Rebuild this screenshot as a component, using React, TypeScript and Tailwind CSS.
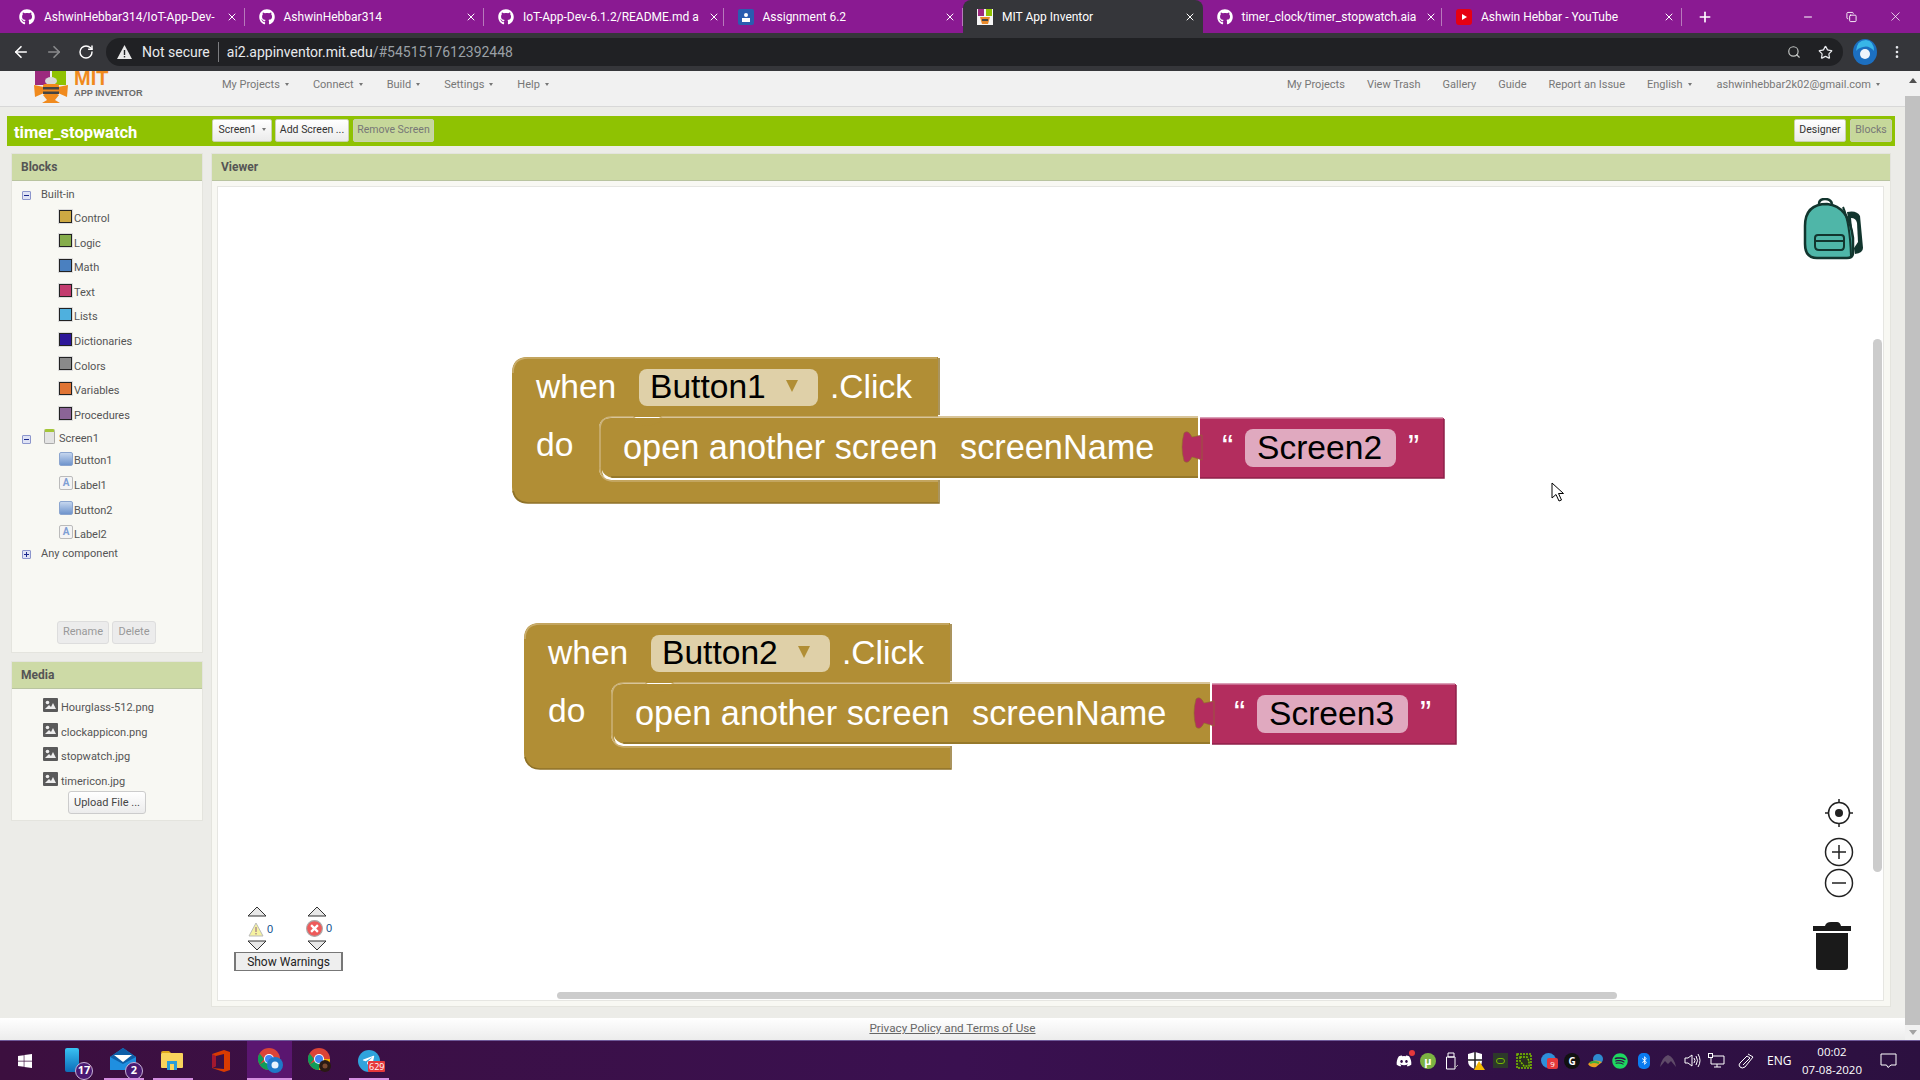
import { ArrowLeft, ArrowRight, RotateCw, Search, Star, X, Plus, Minus, Copy, EllipsisVertical } from 'lucide-react'
import { FaGithub, FaWindows, FaDiscord, FaSpotify, FaBluetoothB, FaTelegramPlane } from 'react-icons/fa'

const TABS = [
  { title: 'AshwinHebbar314/IoT-App-Dev-', icon: 'gh' },
  { title: 'AshwinHebbar314', icon: 'gh' },
  { title: 'IoT-App-Dev-6.1.2/README.md a', icon: 'gh' },
  { title: 'Assignment 6.2', icon: 'doc' },
  { title: 'MIT App Inventor', icon: 'mit', active: true },
  { title: 'timer_clock/timer_stopwatch.aia', icon: 'gh' },
  { title: 'Ashwin Hebbar - YouTube', icon: 'yt' },
]

const BUILT_IN = [
  { name: 'Control', color: 'bg-[#cda943]' },
  { name: 'Logic', color: 'bg-[#85ad4b]' },
  { name: 'Math', color: 'bg-[#4a80c0]' },
  { name: 'Text', color: 'bg-[#c23b6e]' },
  { name: 'Lists', color: 'bg-[#4fb0de]' },
  { name: 'Dictionaries', color: 'bg-[#2d1799]' },
  { name: 'Colors', color: 'bg-[#8a8a8a]' },
  { name: 'Variables', color: 'bg-[#e07434]' },
  { name: 'Procedures', color: 'bg-[#8b6497]' },
]

const COMPONENTS = [
  { name: 'Button1', kind: 'button' },
  { name: 'Label1', kind: 'label' },
  { name: 'Button2', kind: 'button' },
  { name: 'Label2', kind: 'label' },
]

const MEDIA = ['Hourglass-512.png', 'clockappicon.png', 'stopwatch.jpg', 'timericon.jpg']

function TabIcon({ kind }: { kind: string }) {
  if (kind === 'gh') return <FaGithub className="w-[16px] h-[16px] text-white shrink-0" />
  if (kind === 'doc')
    return (
      <svg width="16" height="16" viewBox="0 0 16 16" className="shrink-0">
        <rect width="16" height="16" rx="2" fill="#2a5db0" />
        <circle cx="8" cy="6" r="2" fill="#fff" />
        <rect x="4" y="9" width="8" height="4" fill="#fff" />
      </svg>
    )
  if (kind === 'yt')
    return (
      <svg width="16" height="16" viewBox="0 0 16 16" className="shrink-0">
        <rect width="16" height="16" rx="3" fill="#e60012" />
        <path d="M6 5l5 3-5 3z" fill="#fff" />
      </svg>
    )
  return (
    <svg width="16" height="16" viewBox="0 0 16 16" className="shrink-0">
      <rect width="16" height="16" fill="#f5f5f5" />
      <rect x="1" y="0" width="6" height="7" fill="#9c2a7e" />
      <rect x="9" y="0" width="6" height="7" fill="#8fc202" />
      <path d="M3 8h10l-2 7H5z" fill="#e98a2b" />
      <rect x="5" y="10" width="6" height="2" fill="#444" />
    </svg>
  )
}

function Tab({ title, icon, active }: { title: string; icon: string; active?: boolean }) {
  return (
    <div className={`w-[239.5px] h-[33px] shrink-0 flex items-center pl-[14px] pr-[7px] pt-[1px] gap-[9px] relative ${active ? 'bg-[#35363a] rounded-t-[8px]' : ''}`}>
      <TabIcon kind={icon} />
      <span className="flex-1 text-[12px] text-white whitespace-nowrap">{title}</span>
      <X className="w-[12px] h-[12px] text-white shrink-0" strokeWidth={2} />
      {!active && <div className="absolute right-0 top-[8px] h-[18px] w-px bg-[#b77abb]" />}
    </div>
  )
}

function Caret() {
  return <span className="inline-block ml-[5px] mb-[2px] w-0 h-0 border-x-[2px] border-x-transparent border-t-[3px] border-t-[#777]" />
}

function Logo() {
  return (
    <div className="w-[118px] h-[35px] ml-[32px] relative overflow-hidden shrink-0">
      <svg width="40" height="35" viewBox="0 0 40 35" className="absolute left-0 top-0">
        <rect x="3" y="0" width="15" height="14" fill="#9c2a7e" />
        <rect x="20" y="0" width="14" height="14" fill="#8fc202" />
        <path d="M2 14l10 2v6l-9 4zM36 14l-10 2v6l9 4z" fill="#f08a1d" />
        <ellipse cx="19" cy="10" rx="6" ry="4" fill="#d9d9d9" />
        <rect x="11" y="13" width="16" height="11" rx="2" fill="#f08a1d" />
        <rect x="11" y="16" width="16" height="2.5" fill="#444" />
        <rect x="11" y="20.5" width="16" height="2.5" fill="#444" />
        <path d="M11 24h16l-4 5 5 3H10l5-3z" fill="#f08a1d" />
      </svg>
      <span className="absolute left-[42px] -top-[5px] font-['Liberation_Sans',sans-serif] font-bold text-[20px] leading-[24px] text-[#f08a1d]">MIT</span>
      <span className="absolute left-[42px] top-[16px] font-['Liberation_Sans',sans-serif] font-bold text-[9.2px] leading-[12px] text-[#6b6b6b] whitespace-nowrap">APP INVENTOR</span>
    </div>
  )
}

function GreenButton({ label, off, caret, className }: { label: string; off?: boolean; caret?: boolean; className: string }) {
  return (
    <div className={`h-[23px] -mt-[2px] rounded-[2px] flex items-center justify-center text-[10.5px] whitespace-nowrap border border-[#c9d1b0] ${off ? 'bg-[#c6d89a] text-[#777]' : 'bg-gradient-to-b from-white to-[#ebebeb] text-[#333]'} ${className}`}>
      {label}
      {caret && <Caret />}
    </div>
  )
}

function TreeToggle({ open }: { open?: boolean }) {
  return (
    <span className="w-[9px] h-[9px] rounded-[1px] bg-[#dfe3f5] border border-[#8c96cc] relative shrink-0">
      <span className="absolute left-[1px] right-[1px] top-[3px] h-px bg-[#1c2a8c]" />
      {!open && <span className="absolute top-[1px] bottom-[1px] left-[3px] w-px bg-[#1c2a8c]" />}
    </span>
  )
}

function ComponentIcon({ kind }: { kind: string }) {
  if (kind === 'button')
    return <span className="w-[14px] h-[14px] -mt-[6px] rounded-[2px] bg-gradient-to-b from-[#c5d6ee] to-[#6f94cc] border border-[#8ba5cf] shrink-0" />
  return (
    <span className="w-[14px] h-[14px] -mt-[6px] rounded-[2px] bg-[#f4f4f4] border border-[#bbb] shrink-0 flex items-center justify-center text-[10px] leading-none font-bold text-[#7f9fd4]">A</span>
  )
}

function MediaIcon() {
  return (
    <svg width="15" height="14" viewBox="0 0 15 14" className="-mt-[6px] shrink-0">
      <rect width="15" height="14" rx="1" fill="#5a5a5a" />
      <circle cx="4.5" cy="4.5" r="1.8" fill="#eee" />
      <path d="M2 11l4-4 2 2 2-4 3 6z" fill="#eee" />
    </svg>
  )
}

function PanelHeader({ title }: { title: string }) {
  return (
    <div className="h-[27px] bg-[#cddaa6] border-b border-[#b9c4a0] flex items-center pl-[9px] text-[12px] font-bold text-[#555] shrink-0">
      {title}
    </div>
  )
}

function WhenBlock({ button, screen, className }: { button: string; screen: string; className: string }) {
  const t = "font-['Liberation_Sans',sans-serif] text-[33.6px] fill-white"
  const s = "font-['Liberation_Sans',sans-serif] text-[34.3px] fill-white"
  const f = "font-['Liberation_Sans',sans-serif] text-[33.6px] fill-black"
  return (
    <svg width="940" height="150" viewBox="0 0 940 150" className={`absolute ${className}`}>
      <path d="M0 16Q0 0 16 0H426V60H100Q87 60 87 72V110Q87 123 100 123H426V146H16Q0 146 0 130Z" fill="#b18e35" />
      <path d="M1 16Q1 1 16 1H425" fill="none" stroke="#c9ad6e" strokeWidth="1.5" />
      <path d="M427 1V58M427 123V146H16Q4 146 1 134" fill="none" stroke="#8e7229" strokeWidth="1.5" />
      <path d="M99 61H686V121H99Q87 121 87 109V73Q87 61 99 61Z" fill="#b18e35" />
      <path d="M88 110V73Q88 60 100 60H121L130 66Q134 68 140 66L150 60H686" fill="none" stroke="#cbb27a" strokeWidth="1.5" />
      <path d="M121 61L130 68Q134 70 140 68L158 61Z" fill="#b18e35" />
      <path d="M88 110Q88 123 100 124H426" fill="none" stroke="#c9ad6e" strokeWidth="1.5" />
      <path d="M99 120H686" fill="none" stroke="#8e7229" strokeWidth="1.5" />
      <path d="M90 113Q92 119 100 121L96 122Q90 120 90 113Z" fill="#fff" />
      <rect x="688" y="61" width="244" height="60" fill="#b32d5e" />
      <path d="M688 61H931" fill="none" stroke="#cf7f9f" strokeWidth="1.5" />
      <path d="M932 62V121H688" fill="none" stroke="#8f2049" strokeWidth="1.5" />
      <path d="M690 78L680 80Q676 72 672 76Q668 90 672 104Q676 108 680 100L690 103Z" fill="#b32d5e" stroke="#8e7229" strokeWidth="0.6" />
      <rect x="127" y="12" width="179" height="37" rx="8" fill="#dfd0a8" />
      <path d="M274 23H286L280 35Z" fill="#b18e35" />
      <rect x="733" y="72" width="151" height="38" rx="8" fill="#e0a9bf" />
      <text x="24" y="41" className={t}>when</text>
      <text x="138" y="41" className={f}>{button}</text>
      <text x="318" y="41" className={t}>.Click</text>
      <text x="24" y="99" className={t}>do</text>
      <text x="111" y="102" className={s}>open another screen</text>
      <text x="448" y="102" className={s}>screenName</text>
      <text x="710" y="101" className={t}>“</text>
      <text x="745" y="102" className={f}>{screen}</text>
      <text x="896" y="101" className={t}>”</text>
    </svg>
  )
}

function Backpack() {
  return (
    <svg width="62" height="62" viewBox="0 0 62 62" className="absolute left-[1585px] top-[11px]">
      <path d="M44 14Q54 12 57 18L60 50Q60 55 52 56Z" fill="#12352e" />
      <path d="M48 20Q53 20 54 25L55 44L51 50Z" fill="#fff" />
      <path d="M16 6Q16 1 22 1Q28 1 29 6" fill="none" stroke="#12352e" strokeWidth="2.5" />
      <path d="M2 28Q2 6 24 6Q46 8 50 40V55Q50 60 44 60H14Q2 60 2 46Z" fill="#4fb6a8" stroke="#12352e" strokeWidth="2.5" />
      <path d="M40 9Q47 25 48 58" fill="none" stroke="#12352e" strokeWidth="2" />
      <path d="M12 40Q12 37 15 37H38Q41 37 41 40V48Q41 52 38 52H16Q12 52 12 48Z" fill="#4fb6a8" stroke="#12352e" strokeWidth="2" />
      <path d="M12 43H41" stroke="#12352e" strokeWidth="2" />
    </svg>
  )
}

function Tri({ up }: { up?: boolean }) {
  return (
    <svg width="20" height="11" viewBox="0 0 20 11" className="block">
      <path d={up ? 'M1 10L10 1L19 10Z' : 'M1 1L10 10L19 1Z'} fill="#e8e8e8" stroke="#333" strokeWidth="1" />
    </svg>
  )
}

function Chrome({ badge }: { badge: 'blue' | 'photo' }) {
  return (
    <svg width="26" height="26" viewBox="0 0 26 26" className="ml-[3px]">
      <circle cx="11" cy="11" r="11" fill="#db4437" />
      <path d="M11 11L1.5 16.5A11 11 0 0 0 11 22Z" fill="#0f9d58" />
      <path d="M1.5 16.5A11 11 0 0 1 1.5 5.5L6 11Z" fill="#0f9d58" />
      <path d="M11 11L22 11A11 11 0 0 1 11 22Z" fill="#f4b400" />
      <circle cx="11" cy="11" r="5" fill="#fff" />
      <circle cx="11" cy="11" r="4" fill="#4285f4" />
      {badge === 'blue' ? (
        <>
          <circle cx="17" cy="17" r="8" fill="#1f78c8" />
          <circle cx="17" cy="17" r="3.5" fill="#e8f4ff" />
        </>
      ) : (
        <>
          <circle cx="17" cy="18" r="6" fill="#2a1a14" />
          <circle cx="17" cy="18" r="2.5" fill="#7a4a30" />
        </>
      )}
    </svg>
  )
}

function TaskBadge({ n }: { n: string }) {
  return (
    <span className="absolute left-[15px] top-[14px] w-[18px] h-[18px] rounded-full bg-[#4a1a72] border border-[#c9b5d8] text-white text-[11px] font-bold flex items-center justify-center">{n}</span>
  )
}

function Taskbar() {
  return (
    <div className="h-[40px] shrink-0 bg-gradient-to-r from-[#3c0f3f] via-[#3a1050] to-[#2c1040] border-t border-[#6f5a9a] flex items-center relative text-white font-['Open_Sans',sans-serif]">
      <div className="w-[49px] flex justify-center"><FaWindows className="w-[16px] h-[16px]" /></div>
      <div className="w-[49px] flex justify-center">
        <div className="relative w-[32px] h-[26px] ml-[5px]">
          <span className="absolute left-[5px] top-0 w-[14px] h-[24px] rounded-[2px] bg-gradient-to-b from-[#39c2f3] to-[#0e6db8]" />
          <TaskBadge n="17" />
        </div>
      </div>
      <div className="w-[49px] flex justify-center">
        <div className="relative w-[32px] h-[26px] ml-[7px]">
          <svg width="26" height="22" viewBox="0 0 26 22" className="absolute left-0 top-0">
            <path d="M0 9L13 0L26 9V22H0Z" fill="#1f8fe0" />
            <path d="M0 9L13 0L26 9L13 16Z" fill="#0f5fa8" />
            <path d="M4 7H22L13 14Z" fill="#fff" />
          </svg>
          <TaskBadge n="2" />
        </div>
      </div>
      <div className="w-[49px] flex justify-center">
        <svg width="22" height="19" viewBox="0 0 22 19">
          <path d="M0 2Q0 0 2 0H8L10 2H0Z" fill="#e0a81c" />
          <rect y="2" width="22" height="15" rx="1" fill="#f9d35c" />
          <rect x="6" y="10" width="10" height="9" fill="#2b9ed8" />
          <rect x="9" y="13" width="4" height="6" fill="#f9d35c" />
        </svg>
      </div>
      <div className="w-[49px] flex justify-center">
        <svg width="18" height="22" viewBox="0 0 18 22">
          <path d="M0 4L12 0L18 2V20L12 22L0 18L12 19V4L4 6V16L0 18Z" fill="#d83b01" />
          <path d="M0 4L4 6V16L0 18Z" fill="#a3182f" />
        </svg>
      </div>
      <div className="w-[45px] h-full bg-[#5a1670] flex justify-center items-center ml-[2px]"><Chrome badge="blue" /></div>
      <div className="w-[55px] flex justify-center"><Chrome badge="photo" /></div>
      <div className="w-[43px] flex justify-center relative">
        <span className="w-[22px] h-[22px] rounded-full bg-[#2fa3dc] flex items-center justify-center">
          <FaTelegramPlane className="w-[13px] h-[13px] text-white" />
        </span>
        <span className="absolute left-[21px] top-[11px] px-[1px] rounded-[1px] bg-[#e5383b] text-[9px] leading-[11px] text-white">629</span>
      </div>
      <div className="absolute bottom-0 left-[104px] w-[40px] h-[2px] bg-[#d48ee0]" />
      <div className="absolute bottom-0 left-[153px] w-[40px] h-[2px] bg-[#d48ee0]" />
      <div className="absolute bottom-0 left-[247px] w-[45px] h-[2px] bg-[#d48ee0]" />
      <div className="absolute bottom-0 left-[349px] w-[40px] h-[2px] bg-[#d48ee0]" />

      <div className="flex-1" />
      <div className="flex items-center h-full">
        <div className="w-[24px] flex justify-center relative">
          <FaDiscord className="w-[16px] h-[16px]" />
          <span className="absolute right-[1px] -top-[3px] w-[6px] h-[6px] rounded-full bg-[#e5383b]" />
        </div>
        <div className="w-[24px] flex justify-center">
          <span className="w-[16px] h-[16px] rounded-full bg-[#7cb342] text-white text-[11px] leading-[16px] text-center font-bold">µ</span>
        </div>
        <div className="w-[24px] flex justify-center">
          <svg width="14" height="18" viewBox="0 0 14 18" fill="none" stroke="#fff" strokeWidth="1">
            <path d="M3 1H9V5H3ZM1.5 5H10V17H1.5Z" />
            <path d="M9 14l1.5 1.5L13 13" stroke="#aaa" />
          </svg>
        </div>
        <div className="w-[24px] flex justify-center">
          <svg width="18" height="18" viewBox="0 0 18 18">
            <path d="M1 2L8 0L15 2V9Q15 15 8 17Q1 15 1 9Z" fill="#fff" />
            <path d="M8 0V17M1 8H15" stroke="#222" strokeWidth="1.5" />
            <path d="M12 9L18 18H7Z" fill="#f5b800" />
          </svg>
        </div>
        <div className="w-[24px] flex justify-center">
          <span className="w-[15px] h-[15px] bg-[#2d3a2a] flex items-center justify-center">
            <span className="w-[9px] h-[6px] rounded-full border border-[#76b900]" />
          </span>
        </div>
        <div className="w-[24px] flex justify-center">
          <svg width="16" height="16" viewBox="0 0 16 16" fill="none" stroke="#7cc000" strokeWidth="1.5" strokeDasharray="2 1">
            <rect x="1" y="1" width="14" height="14" fill="#2a3020" />
            <path d="M4 4H11L13 8V13H8L4 8Z" />
          </svg>
        </div>
        <div className="w-[24px] flex justify-center relative">
          <span className="w-[15px] h-[15px] rounded-full bg-[#2f8fd8]" />
          <span className="absolute left-[11px] top-[5px] w-[11px] h-[11px] rounded-[2px] bg-[#e5383b] text-[8px] leading-[11px] text-center">9</span>
        </div>
        <div className="w-[24px] flex justify-center">
          <span className="w-[16px] h-[16px] rounded-full bg-[#111] text-white text-[10px] leading-[16px] text-center font-bold">G</span>
        </div>
        <div className="w-[24px] flex justify-center">
          <svg width="16" height="16" viewBox="0 0 16 16">
            <circle cx="10" cy="6" r="5" fill="#2e8bcf" />
            <path d="M0 11Q6 5 14 9L8 14Q3 15 0 11Z" fill="#e8a020" />
            <path d="M2 10Q6 8 11 10" stroke="#3cae3c" strokeWidth="2" fill="none" />
          </svg>
        </div>
        <div className="w-[24px] flex justify-center"><FaSpotify className="w-[16px] h-[16px] text-[#1ed760]" /></div>
        <div className="w-[24px] flex justify-center">
          <span className="w-[12px] h-[16px] rounded-[5px] bg-[#0a7bf0] flex items-center justify-center"><FaBluetoothB className="w-[9px] h-[9px]" /></span>
        </div>
        <div className="w-[24px] flex justify-center">
          <svg width="16" height="12" viewBox="0 0 16 12"><path d="M0 12Q2 2 8 0Q14 2 16 12L11 6L8 9L5 6Z" fill="#5f4a68" /></svg>
        </div>
        <div className="w-[24px] flex justify-center">
          <svg width="17" height="15" viewBox="0 0 17 15" fill="none" stroke="#fff" strokeWidth="1">
            <path d="M1 5H4L8 2V13L4 10H1Z" />
            <path d="M10 5Q12 7.5 10 10M12 3Q15 7.5 12 12M14 1Q18 7.5 14 14" />
          </svg>
        </div>
        <div className="w-[24px] flex justify-center">
          <svg width="17" height="15" viewBox="0 0 17 15" fill="none" stroke="#fff" strokeWidth="1">
            <path d="M3 3H16V11H3ZM9 11V14M6 14H13" />
            <rect x="0.5" y="0.5" width="4" height="4" fill="#2c1040" />
          </svg>
        </div>
        <div className="w-[36px] flex justify-center">
          <svg width="16" height="16" viewBox="0 0 16 16" fill="none" stroke="#fff" strokeWidth="1">
            <path d="M10 1L15 4L7 14Q4 16 2 14Q0 12 2 10L9 3L12 5L5 12" />
          </svg>
        </div>
      </div>
      <span className="text-[12px] ml-[3px] w-[30px]">ENG</span>
      <div className="w-[70px] mr-[5px] text-center text-[11.5px] leading-[18px]">
        <div>00:02</div>
        <div>07-08-2020</div>
      </div>
      <div className="w-[48px] pr-[16px] flex justify-center">
        <svg width="17" height="15" viewBox="0 0 17 15" fill="none" stroke="#fff" strokeWidth="1">
          <path d="M1 1H16V12H11L8 14.5L6.5 12H1Z" />
        </svg>
      </div>
    </div>
  )
}

export default function App() {
  return (
    <div className="w-[1920px] h-[1080px] overflow-hidden flex flex-col font-['Roboto',sans-serif]">
      {/* Browser tabs */}
      <div className="h-[33px] bg-[#8a1a92] flex items-center shrink-0 pl-[5px] relative">
        {TABS.map((tab) => (
          <Tab key={tab.title} {...tab} />
        ))}
        <Plus className="w-[16px] h-[16px] text-white ml-[15px]" strokeWidth={2.5} />
        <div className="flex-1" />
        <Minus className="w-[12px] h-[12px] text-white mr-[32px]" />
        <Copy className="w-[11px] h-[12px] text-white mr-[31px]" />
        <X className="w-[15px] h-[15px] text-white mr-[17px]" strokeWidth={1.2} />
      </div>

      {/* Browser toolbar */}
      <div className="h-[38px] bg-[#35363a] flex items-center shrink-0 pl-[12px]">
        <ArrowLeft className="w-[18px] h-[18px] text-white" strokeWidth={2.2} />
        <ArrowRight className="w-[18px] h-[18px] text-[#8a8b8d] ml-[15px]" strokeWidth={2.2} />
        <RotateCw className="w-[16px] h-[16px] text-white ml-[15px]" strokeWidth={2.2} />
        <div className="ml-[12px] w-[1737px] h-[28px] rounded-full bg-[#202124] flex items-center pl-[11px] relative text-[14px]">
          <svg width="15" height="14" viewBox="0 0 15 14"><path d="M7.5 0L15 14H0Z" fill="#e8e8e8" /><rect x="6.8" y="5" width="1.4" height="5" fill="#202124" /><rect x="6.8" y="11" width="1.4" height="1.4" fill="#202124" /></svg>
          <span className="ml-[10px] text-[#e8eaed]">Not secure</span>
          <span className="ml-[8px] w-px h-[20px] bg-[#7c7d80]" />
          <span className="ml-[8px] text-[#e8eaed]">ai2.appinventor.mit.edu</span>
          <span className="text-[#9aa0a6]">/#5451517612392448</span>
          <div className="flex-1" />
          <Search className="w-[14px] h-[14px] text-[#c4c7c5]" />
          <Star className="w-[15px] h-[15px] text-[#e8eaed] ml-[17px] mr-[10px]" />
        </div>
        <svg width="24" height="26" viewBox="0 0 24 26" className="ml-[10px] shrink-0">
          <ellipse cx="12" cy="13" rx="12" ry="13" fill="#1c6fc0" />
          <path d="M3 12Q4 1 13 1Q21 2 21 12Q16 6 10 8Q5 9 3 12Z" fill="#38b6e8" />
          <circle cx="12" cy="15" r="5" fill="#eef4fb" />
        </svg>
        <EllipsisVertical className="w-[16px] h-[16px] text-[#e8eaed] ml-[12px]" />
      </div>

      {/* Page */}
      <div className="flex-1 flex min-h-0 bg-[#ecece8]">
        <div className="flex-1 flex flex-col min-w-0">
          {/* App Inventor menu */}
          <div className="h-[36px] bg-[#f1f1f1] border-b border-[#d8d8d8] flex items-center shrink-0 text-[11px] text-[#777]">
            <Logo />
            <div className="flex items-center ml-[72px] gap-[24px] -mt-[6px]">
              <span>My Projects<Caret /></span>
              <span>Connect<Caret /></span>
              <span>Build<Caret /></span>
              <span>Settings<Caret /></span>
              <span>Help<Caret /></span>
            </div>
            <div className="flex-1" />
            <div className="flex items-center gap-[22px] pr-[25px] -mt-[6px]">
              <span>My Projects</span>
              <span>View Trash</span>
              <span>Gallery</span>
              <span>Guide</span>
              <span>Report an Issue</span>
              <span>English<Caret /></span>
              <span className="ml-[3px]">ashwinhebbar2k02@gmail.com<Caret /></span>
            </div>
          </div>

          {/* Project bar */}
          <div className="h-[30px] mt-[9px] ml-[7px] mr-[10px] bg-[#8fc202] flex items-center shrink-0">
            <span className="ml-[7px] w-[198px] text-[16.5px] font-bold text-white pt-[5px]">timer_stopwatch</span>
            <GreenButton label="Screen1" caret className="w-[60px]" />
            <GreenButton label="Add Screen ..." className="w-[74px] ml-[3px]" />
            <GreenButton label="Remove Screen" off className="w-[81px] ml-[4px]" />
            <div className="flex-1" />
            <GreenButton label="Designer" className="w-[52px]" />
            <GreenButton label="Blocks" off className="w-[42px] ml-[4px] mr-[3px]" />
          </div>

          {/* Panels */}
          <div className="flex mt-[7px] ml-[11px] gap-[8px]">
            <div className="w-[192px] shrink-0 flex flex-col gap-[8px] text-[11px] text-[#555]">
              <div className="h-[500px] bg-[#f8f8f3] border border-[#e4e4de] flex flex-col">
                <PanelHeader title="Blocks" />
                <div className="flex items-center h-[14px] mt-[7px] pl-[10px]">
                  <TreeToggle open />
                  <span className="ml-[10px]">Built-in</span>
                </div>
                <div className="mt-[5px]">
                  {BUILT_IN.map((b) => (
                    <div key={b.name} className="h-[24.6px] flex items-center pl-[47px]">
                      <span className={`w-[13px] h-[13px] -mt-[6px] border border-[#222] ring-1 ring-[#dcdcdc] ${b.color}`} />
                      <span className="ml-[2px]">{b.name}</span>
                    </div>
                  ))}
                </div>
                <div className="h-[21px] flex items-center pl-[10px] pt-[1px]">
                  <TreeToggle open />
                  <span className="ml-[13px] w-[11px] h-[15px] -mt-[6px] rounded-[2px] bg-[#e4e4e4] border border-[#aaa] border-t-[3px] border-t-[#a4c639]" />
                  <span className="ml-[4px]">Screen1</span>
                </div>
                <div>
                  {COMPONENTS.map((c) => (
                    <div key={c.name} className="h-[24.6px] flex items-center pl-[47px]">
                      <ComponentIcon kind={c.kind} />
                      <span className="ml-[1px]">{c.name}</span>
                    </div>
                  ))}
                </div>
                <div className="flex items-center h-[14px] pl-[10px]">
                  <TreeToggle />
                  <span className="ml-[10px]">Any component</span>
                </div>
                <div className="mt-auto mb-[8px] flex justify-center gap-[3px] pr-[1px]">
                  <span className="w-[52px] h-[23px] rounded-[3px] border border-[#ddd] bg-[#ececec] text-[#999] flex items-center justify-center">Rename</span>
                  <span className="w-[44px] h-[23px] rounded-[3px] border border-[#ddd] bg-[#ececec] text-[#999] flex items-center justify-center">Delete</span>
                </div>
              </div>
              <div className="h-[160px] bg-[#f8f8f3] border border-[#e4e4de] flex flex-col">
                <PanelHeader title="Media" />
                <div className="mt-[7px]">
                  {MEDIA.map((m) => (
                    <div key={m} className="h-[24.6px] flex items-center pl-[31px]">
                      <MediaIcon />
                      <span className="ml-[3px]">{m}</span>
                    </div>
                  ))}
                </div>
                <div className="flex justify-center -mt-[3px]">
                  <span className="w-[78px] h-[23px] rounded-[3px] border border-[#ccc] bg-gradient-to-b from-white to-[#ececec] text-[#444] flex items-center justify-center">Upload File ...</span>
                </div>
              </div>
            </div>

            <div className="w-[1680px] h-[854px] bg-[#f8f8f3] border border-[#e4e4de] flex flex-col">
              <PanelHeader title="Viewer" />
              <div className="h-[815px] mt-[5px] ml-[5px] mr-[6px] bg-white border border-[#e6e6e2] relative overflow-hidden">
                <WhenBlock button="Button1" screen="Screen2" className="left-[294px] top-[170px]" />
                <WhenBlock button="Button2" screen="Screen3" className="left-[306px] top-[436px]" />
                <Backpack />

                {/* cursor */}
                <svg width="14" height="20" viewBox="0 0 14 20" className="absolute left-[1333px] top-[295px]">
                  <path d="M1 1V16L5 12.5L8 19L10.5 18L7.5 11.5H12.5Z" fill="#fff" stroke="#000" strokeWidth="1" />
                </svg>

                {/* warning counters */}
                <div className="absolute left-[29px] top-[719px] w-[20px]"><Tri up /></div>
                <div className="absolute left-[89px] top-[719px] w-[20px]"><Tri up /></div>
                <div className="absolute left-[30px] top-[734px] flex items-center font-['Liberation_Sans',sans-serif] text-[11px] text-[#0a4a8a]">
                  <svg width="16" height="15" viewBox="0 0 16 15"><path d="M8 1L15 14H1Z" fill="#f5f2a0" stroke="#bbb" /><rect x="7.3" y="5" width="1.4" height="5" fill="#a88" /><rect x="7.3" y="11" width="1.4" height="1.4" fill="#a88" /></svg>
                  <span className="ml-[3px]">0</span>
                </div>
                <div className="absolute left-[88px] top-[733px] flex items-center font-['Liberation_Sans',sans-serif] text-[11px] text-[#0a4a8a]">
                  <svg width="17" height="17" viewBox="0 0 15 15"><circle cx="7.5" cy="7.5" r="7" fill="#ee5a5a" stroke="#aaa" /><path d="M4.5 4.5L10.5 10.5M10.5 4.5L4.5 10.5" stroke="#fff" strokeWidth="2" /></svg>
                  <span className="ml-[3px]">0</span>
                </div>
                <div className="absolute left-[29px] top-[753px] w-[20px]"><Tri /></div>
                <div className="absolute left-[89px] top-[753px] w-[20px]"><Tri /></div>
                <div className="absolute left-[16px] top-[765px] w-[109px] h-[19px] bg-[#eeeeee] border border-[#777] border-x-2 flex items-center justify-center text-[12px] text-[#222]">Show Warnings</div>

                {/* workspace controls */}
                <svg width="30" height="30" viewBox="0 0 30 30" className="absolute left-[1606px] top-[611px]">
                  <circle cx="15" cy="15" r="10.5" fill="#fff" stroke="#222" strokeWidth="1.5" />
                  <circle cx="15" cy="15" r="4" fill="#222" />
                  <path d="M15 1V5M15 25V29M1 15H5M25 15H29" stroke="#222" strokeWidth="1.5" />
                </svg>
                <svg width="30" height="30" viewBox="0 0 30 30" className="absolute left-[1606px] top-[650px]">
                  <circle cx="15" cy="15" r="13.5" fill="#fff" stroke="#222" strokeWidth="1.5" />
                  <path d="M15 8V22M8 15H22" stroke="#222" strokeWidth="1.5" />
                </svg>
                <svg width="30" height="30" viewBox="0 0 30 30" className="absolute left-[1606px] top-[681px]">
                  <circle cx="15" cy="15" r="13.5" fill="#fff" stroke="#222" strokeWidth="1.5" />
                  <path d="M8 15H22" stroke="#222" strokeWidth="1.5" />
                </svg>
                <svg width="38" height="48" viewBox="0 0 38 48" className="absolute left-[1595px] top-[735px]">
                  <path d="M0 4H12Q13 0 18 0H24Q27 0 28 4H38V9H0Z" fill="#1a1a1a" />
                  <path d="M3 11H35V45Q35 48 32 48H6Q3 48 3 45Z" fill="#1a1a1a" />
                </svg>

                {/* workspace scrollbars */}
                <div className="absolute left-[1655px] top-[152px] w-[9px] h-[533px] rounded-full bg-[#cccccc]" />
                <div className="absolute left-[339px] top-[805px] w-[1060px] h-[7px] rounded-full bg-[#cccccc]" />
              </div>
            </div>
          </div>

          {/* Footer */}
          <div className="mt-auto h-[22px] bg-gradient-to-b from-white to-[#ececec] flex items-center justify-center shrink-0 text-[11.7px] text-[#666] underline">
            Privacy Policy and Terms of Use
          </div>
        </div>

        {/* Page scrollbar */}
        <div className="w-[15px] bg-[#f1f1f1] flex flex-col items-center shrink-0">
          <span className="mt-[7px] w-0 h-0 border-x-[4px] border-x-transparent border-b-[5px] border-b-[#505050]" />
          <div className="mt-[13px] w-full flex-1 bg-[#c1c1c1]" />
          <span className="my-[5px] w-0 h-0 border-x-[4px] border-x-transparent border-t-[5px] border-t-[#a3a3a3]" />
        </div>
      </div>

      <Taskbar />
    </div>
  )
}
